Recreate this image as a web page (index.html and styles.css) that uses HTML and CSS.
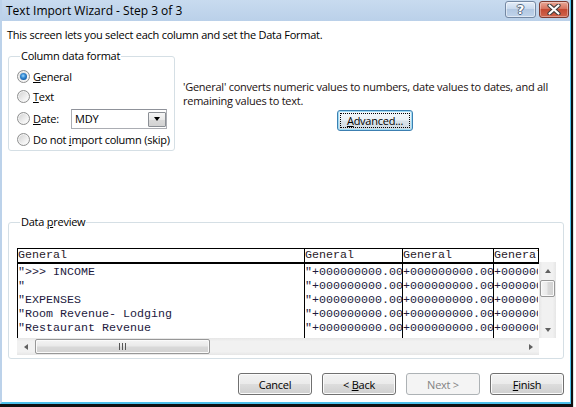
FILE: index.html
```html
<!DOCTYPE html>
<html>
<head>
<meta charset="utf-8">
<link rel="stylesheet" href="styles.css">
</head>
<body>
<div class="screen">
  <div class="window">
    <div class="frame">
      <div class="titlebar">
        <span class="title">Text Import Wizard - Step 3 of 3</span>
        <div class="caption-buttons">
          <div class="cb help"><span class="q">?</span></div>
          <div class="cb close">
            <svg width="14" height="11" viewBox="0 0 14 11">
              <path d="M2.5 1.5 L11.5 9.5 M11.5 1.5 L2.5 9.5" stroke="#3a3a3a" stroke-width="4.2" stroke-linecap="round"/>
              <path d="M2.5 1.5 L11.5 9.5 M11.5 1.5 L2.5 9.5" stroke="#ffffff" stroke-width="2.2" stroke-linecap="round"/>
            </svg>
          </div>
        </div>
      </div>
      <div class="client">
        <p class="intro">This screen lets you select each column and set the Data Format.</p>
        <div class="top">
          <fieldset class="group format">
            <legend>Column data format</legend>
            <div class="opt"><span class="radio checked"></span><span><u>G</u>eneral</span></div>
            <div class="opt"><span class="radio"></span><span><u>T</u>ext</span></div>
            <div class="opt date"><span class="radio"></span><span class="date-label"><u>D</u>ate:</span>
              <div class="combo"><span>MDY</span><span class="drop"><span class="tri"></span></span></div>
            </div>
            <div class="opt"><span class="radio"></span><span>Do not <u>i</u>mport column (skip)</span></div>
          </fieldset>
          <div class="desc">
            <p>'General' converts numeric values to numbers, date values to dates, and all<br>remaining values to text.</p>
            <button class="btn advanced"><span class="focus"><u>A</u>dvanced...</span></button>
          </div>
        </div>
        <fieldset class="group preview">
          <legend>Data <u>p</u>review</legend>
          <div class="pv">
            <div class="head">
              <div class="c c1">General</div>
              <div class="c c2">General</div>
              <div class="c c3">General</div>
              <div class="c c4">General</div>
            </div>
            <div class="thick"></div>
            <div class="vscroll">
              <div class="arrow-box"><span class="tri-up"></span></div>
              <div class="vthumb"></div>
              <div class="vspace"></div>
              <div class="arrow-box"><span class="tri-down"></span></div>
            </div>
            <div class="data">
              <div class="c c1">"&gt;&gt;&gt; INCOME
"
"EXPENSES
"Room Revenue- Lodging
"Restaurant Revenue</div>
              <div class="c c2">"+000000000.00
"+000000000.00
"+000000000.00
"+000000000.00
"+000000000.00</div>
              <div class="c c3">+000000000.00
+000000000.00
+000000000.00
+000000000.00
+000000000.00</div>
              <div class="c c4">+000000000.00
+000000000.00
+000000000.00
+000000000.00
+000000000.00</div>
            </div>
            <div class="hscroll">
              <div class="harrow"><span class="tri-left"></span></div>
              <div class="hthumb"><span class="grip"></span></div>
              <div class="hspace"></div>
              <div class="harrow"><span class="tri-right"></span></div>
            </div>
          </div>
        </fieldset>
        <div class="buttons">
          <button class="btn">Cancel</button>
          <button class="btn">&lt; <u>B</u>ack</button>
          <button class="btn disabled">Next &gt;</button>
          <button class="btn"><u>F</u>inish</button>
        </div>
      </div>
    </div>
  </div>
  <div class="outside"></div>
</div>
</body>
</html>
```
FILE: styles.css
```css
* { box-sizing: border-box; }
html, body { margin: 0; padding: 0; }
body {
  width: 576px;
  height: 407px;
  overflow: hidden;
  background: #fff;
  font-family: "Open Sans", "Noto Sans", sans-serif;
  font-size: 11px;
  letter-spacing: -0.25px;
  color: #000;
}
u { text-decoration: underline; text-underline-offset: 1px; }
.screen { display: flex; width: 576px; height: 407px; }
.window {
  width: 573px;
  height: 407px;
  flex: none;
  border-right: 2px solid #101010;
  border-bottom: 3px solid #101010;
}
.frame {
  height: 100%;
  display: flex;
  flex-direction: column;
  border-left: 2px solid #bcd2ea;
  border-right: 1px solid #4cc0ea;
  border-bottom: 2px solid #4cc0ea;
}
.outside {
  flex: 1;
  background: #fff;
  border-left: 1px solid #e2e2e2;
}
.titlebar {
  height: 21px;
  flex: none;
  display: flex;
  justify-content: space-between;
  align-items: flex-start;
  background: linear-gradient(#c8dbef, #bad0e9);
  padding-left: 4px;
}
.title {
  line-height: 21px;
  font-size: 12px;
  letter-spacing: 0;
  color: #000;
}
.caption-buttons { display: flex; gap: 3px; margin-top: 1px; margin-right: 1px; }
.cb {
  height: 17px;
  border-radius: 3px;
  display: flex;
  align-items: center;
  justify-content: center;
}
.help {
  width: 31px;
  border: 1px solid #7488a3;
  background: linear-gradient(#e4edf8, #c9daee 45%, #b3c8e2 50%, #c0d3ea);
  box-shadow: inset 0 0 0 1px rgba(255,255,255,0.5);
}
.q {
  font-family: "DejaVu Sans", sans-serif;
  font-weight: bold;
  font-size: 13px;
  line-height: 13px;
  color: #fff;
  letter-spacing: 0;
  text-shadow: 1px 0 #55667d, -1px 0 #55667d, 0 1px #55667d, 0 -1px #55667d;
}
.close {
  width: 30px;
  border: 1px solid #7d3a30;
  background: linear-gradient(#e9a897, #d7735f 45%, #c44a33 50%, #d0654d);
  box-shadow: inset 0 0 0 1px rgba(255,255,255,0.35);
}
.client {
  flex: 1;
  background: #fff;
  display: flex;
  flex-direction: column;
  padding: 0 6px 0 6px;
}
.intro {
  margin: 7px 0 0 -1px;
  line-height: 14px;
  height: 14px;
}
.top { display: flex; align-items: flex-start; margin-top: 7px; }
fieldset.group {
  margin: 0;
  border: 1px solid #d5dfe5;
  border-radius: 3px;
  min-width: 0;
}
fieldset.group legend {
  padding: 0 1px;
  margin-left: 3px;
  line-height: 14px;
  height: 14px;
}
fieldset.format {
  width: 167px;
  height: 102px;
  flex: none;
  padding: 3px 0 0 8px;
}
.opt { display: flex; align-items: center; height: 20px; }
.opt.date { height: 21px; margin-top: 2px; }
.radio {
  width: 13px;
  height: 13px;
  flex: none;
  border-radius: 50%;
  border: 1px solid #8e8f8f;
  background: linear-gradient(135deg, #cfcfcf, #f4f4f4 70%, #fdfdfd);
  margin-right: 3px;
  position: relative;
  box-shadow: inset 0 0 0 1px #f4f4f4;
}
.radio.checked::after {
  content: "";
  position: absolute;
  left: 2px;
  top: 2px;
  width: 7px;
  height: 7px;
  border-radius: 50%;
  background: radial-gradient(circle at 45% 40%, #9fd8ff 0, #3b8fd6 35%, #0f5aa8 75%, #154d8a 100%);
}
.date-label { width: 38px; flex: none; }
.combo {
  width: 96px;
  height: 20px;
  border: 1px solid #abadb3;
  border-top-color: #8f929a;
  background: #fff;
  display: flex;
  align-items: center;
  justify-content: space-between;
  padding-left: 3px;
  padding-right: 0;
}
.drop {
  width: 18px;
  height: 15px;
  margin-top: 1px;
  border: 1px solid #8b8f95;
  border-radius: 1px;
  background: linear-gradient(#f6f6f6, #e8e8e8 50%, #dadada 50%, #d2d2d2);
  display: flex;
  align-items: center;
  justify-content: center;
}
.tri {
  width: 0; height: 0;
  border-left: 3.5px solid transparent;
  border-right: 3.5px solid transparent;
  border-top: 4px solid #000;
}
.desc { margin-left: 8px; margin-top: 31px; }
.desc p { margin: 0; line-height: 14px; white-space: nowrap; color: #1a1010; }
.btn {
  font-family: inherit;
  font-size: 11px;
  letter-spacing: -0.25px;
  color: #000;
  width: 74px;
  height: 22px;
  padding: 0;
  border: 1px solid #707070;
  border-radius: 3px;
  background: linear-gradient(#f2f2f2, #ebebeb 48%, #dddddd 52%, #cfcfcf);
  box-shadow: inset 0 0 0 1px #fbfbfb;
}
.advanced {
  display: block;
  margin-top: 2px;
  margin-left: 154px;
  width: 76px;
  height: 21px;
  border-color: #3c7fb1;
  box-shadow: inset 0 0 0 1px #9fdcf5;
  background: linear-gradient(#f3f7fa, #eaf1f6 48%, #d9e3ea 52%, #cfd9e1);
  padding: 2px;
}
.advanced .focus {
  display: flex;
  align-items: center;
  justify-content: center;
  height: 100%;
  border: 1px dotted #000;
}
.btn.disabled {
  border-color: #adb2b5;
  background: #f4f4f4;
  color: #838383;
  box-shadow: none;
}
fieldset.preview {
  margin-top: 64px;
  height: 144px;
  padding: 19px 0 3px 8px;
}
.pv {
  display: grid;
  grid-template-columns: 522px 17px;
  grid-template-rows: 14px 2px 74px 17px;
  font-family: "Liberation Mono", monospace;
  font-size: 11.667px;
  letter-spacing: 0;
  color: #1d1a3e;
}
.head {
  grid-column: 1;
  grid-row: 1;
  display: flex;
  border-top: 1px solid #000;
  border-right: 1px solid #000;
  line-height: 13px;
  color: #2a1a2a;
}
.thick { grid-column: 1; grid-row: 2; background: #000; }
.c {
  border-left: 1px solid #000;
  white-space: pre;
  overflow: hidden;
  flex: none;
}
.c1 { width: 287px; }
.c2 { width: 98px; }
.c3 { width: 91px; }
.c4 { width: 45px; }
.data {
  grid-column: 1;
  grid-row: 3;
  display: flex;
  overflow: hidden;
  line-height: 14px;
}
.data .c { padding-top: 1px; }
.vscroll {
  grid-column: 2;
  grid-row: 2 / 4;
  display: flex;
  flex-direction: column;
  background: linear-gradient(90deg, #e6e6e6, #f1f1f1 20%, #f1f1f1 80%, #e6e6e6);
}
.arrow-box {
  height: 17px;
  flex: none;
  display: flex;
  align-items: center;
  justify-content: center;
}
.vthumb {
  height: 17px;
  margin: 1px 1px 0 1px;
  border: 1px solid #979797;
  border-radius: 2px;
  background: linear-gradient(90deg, #f4f4f4, #e9e9e9 48%, #d9d9d9 52%, #d2d2d2);
  box-shadow: inset 0 0 0 1px #fafafa;
}
.vspace { flex: 1; }
.tri-up, .tri-down {
  width: 0; height: 0;
  border-left: 3.5px solid transparent;
  border-right: 3.5px solid transparent;
}
.tri-up { border-bottom: 4px solid #606060; }
.tri-down { border-top: 4px solid #606060; }
.hscroll {
  grid-column: 1;
  grid-row: 4;
  display: flex;
  background: linear-gradient(#e6e6e6, #f1f1f1 20%, #f1f1f1 80%, #e6e6e6);
}
.harrow {
  width: 17px;
  flex: none;
  display: flex;
  align-items: center;
  justify-content: center;
}
.tri-left, .tri-right {
  width: 0; height: 0;
  border-top: 3.5px solid transparent;
  border-bottom: 3.5px solid transparent;
}
.tri-left { border-right: 4px solid #606060; }
.tri-right { border-left: 4px solid #606060; }
.hthumb {
  width: 175px;
  margin: 1px 0 1px 1px;
  border: 1px solid #979797;
  border-radius: 2px;
  background: linear-gradient(#f4f4f4, #e9e9e9 48%, #d9d9d9 52%, #d2d2d2);
  box-shadow: inset 0 0 0 1px #fafafa;
  display: flex;
  align-items: center;
  justify-content: center;
}
.grip {
  width: 7px;
  height: 7px;
  background: repeating-linear-gradient(90deg, #555 0 1px, transparent 1px 3px);
}
.hspace { flex: 1; }
.buttons {
  display: flex;
  justify-content: flex-end;
  gap: 10px;
  margin-top: 14px;
}
```
